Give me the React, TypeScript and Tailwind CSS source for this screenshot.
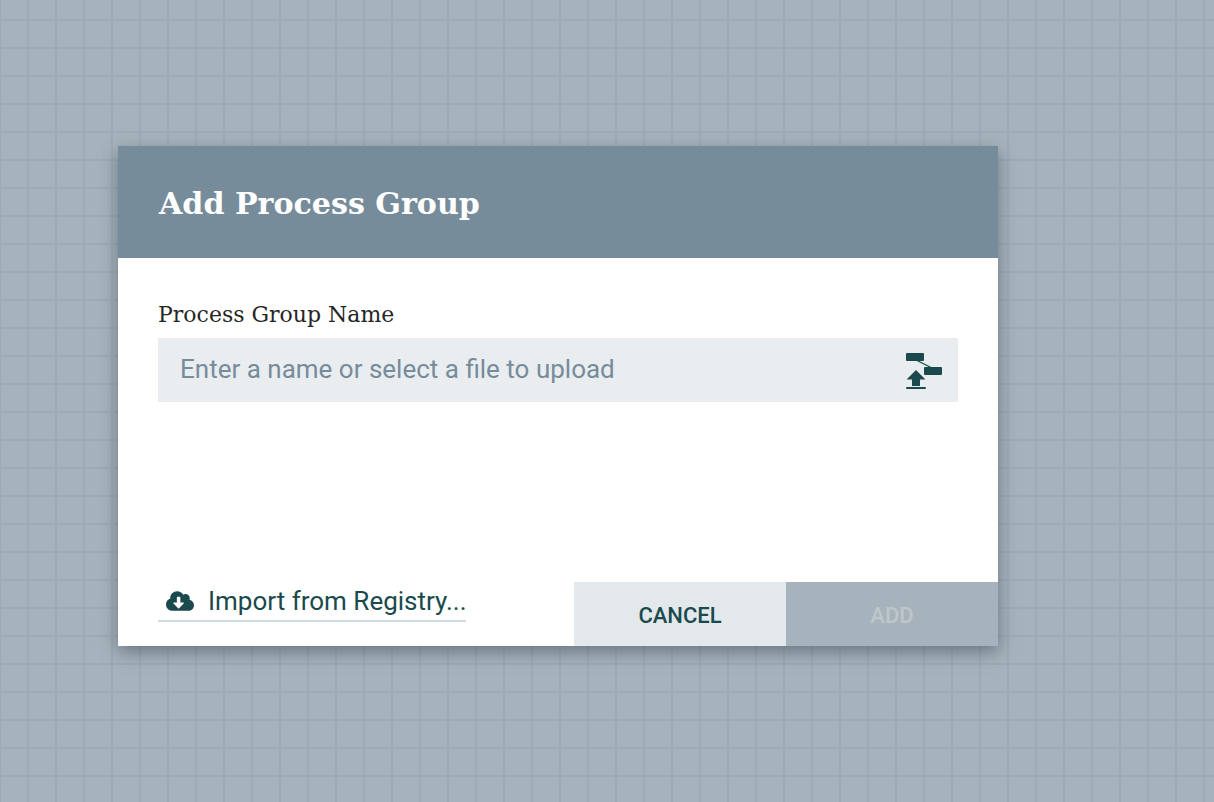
import { FaCloudDownloadAlt } from "react-icons/fa";

function UploadFlowIcon() {
  return (
    <svg width="38" height="38" viewBox="0 0 38 38" className="text-[#1a4a4d]">
      <rect x="1" y="2" width="18" height="8" rx="1" fill="currentColor" />
      <rect x="19" y="16" width="18" height="8" rx="1" fill="currentColor" />
      <path d="M11 9 L27 17" stroke="currentColor" strokeWidth="1.3" />
      <path d="M11 19 L20.5 28.5 H15 V35 H7 V28.5 H1.5 Z" fill="currentColor" />
      <rect x="1" y="36" width="20" height="2" rx="1" fill="currentColor" />
    </svg>
  );
}

export default function App() {
  return (
    <div className="h-[802px] w-[1214px] overflow-hidden bg-[#a6b3bc] bg-[linear-gradient(to_right,#9dabb5_2px,transparent_2px),linear-gradient(to_bottom,#9dabb5_2px,transparent_2px)] bg-[size:28px_28px] bg-[position:27px_19px] pl-[118px] pt-[146px]">
      <div className="flex h-[500px] w-[880px] flex-col bg-white shadow-[0_6px_16px_0_rgba(50,60,70,0.5)]">
        <div className="flex h-[112px] items-center bg-[#778c9a] pl-[41px] pt-[4px]">
          <h1 className="font-['DejaVu_Serif',serif] text-[30.1px] font-bold text-white">Add Process Group</h1>
        </div>
        <div className="flex-1 px-10 pt-[40px]">
          <label className="block pt-px font-['DejaVu_Serif',serif] text-[22px] leading-[31px] text-[#262626]">Process Group Name</label>
          <div className="mt-2 flex h-16 items-center justify-between bg-[#e9edf0] pl-[22px] pr-[15px]">
            <span className="pb-[2px] font-['Roboto',sans-serif] text-[26px] text-[#778c9a]">Enter a name or select a file to upload</span>
            <UploadFlowIcon />
          </div>
        </div>
        <div className="flex h-16 items-stretch justify-between pl-10">
          <div className="flex h-[40px] w-[308px] shrink-0 items-center gap-[14px] border-b-2 border-[#cfdbdc] pl-2 text-[#1a4a4d]">
            <FaCloudDownloadAlt className="shrink-0 text-[28px]" />
            <span className="whitespace-nowrap font-['Roboto',sans-serif] text-[26px]">Import from Registry...</span>
          </div>
          <div className="flex">
            <button className="w-[212px] bg-[#e3e8eb] pt-[2px] font-['Roboto',sans-serif] text-[22px] font-medium text-[#1a4a4d]">CANCEL</button>
            <button className="w-[212px] bg-[#a6b3bc] pt-[2px] font-['Roboto',sans-serif] text-[22px] font-medium text-[#bfc6cb]">ADD</button>
          </div>
        </div>
      </div>
    </div>
  );
}
